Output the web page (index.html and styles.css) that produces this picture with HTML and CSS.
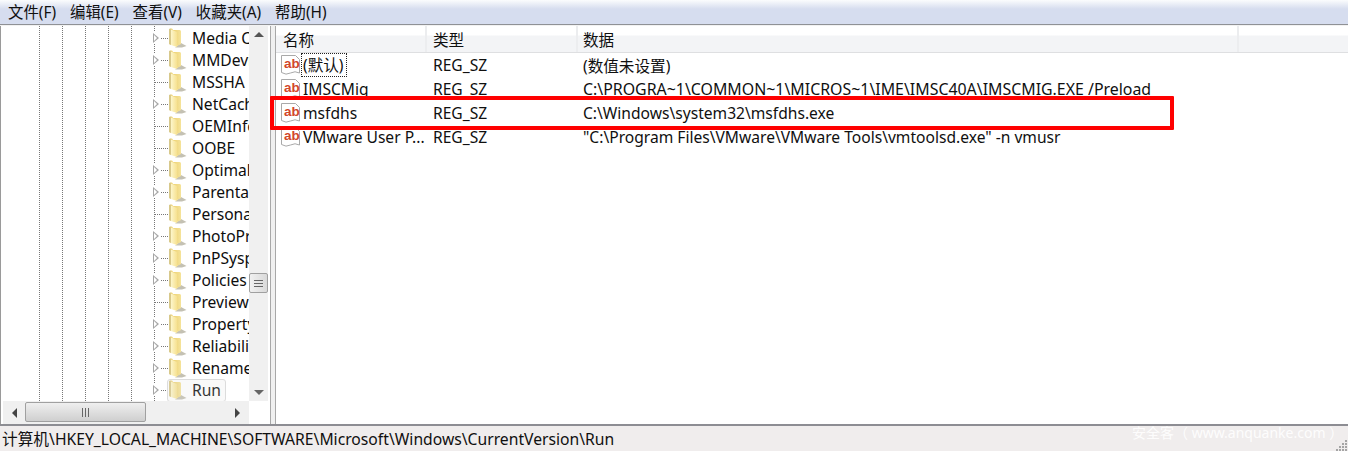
FILE: index.html
```html
<!DOCTYPE html>
<html lang="zh-CN">
<head>
  <meta charset="UTF-8" />
  <title>注册表编辑器</title>
  <link rel="stylesheet" href="styles.css">
</head>
<body>
  <svg class="defs" width="0" height="0" aria-hidden="true">
    <defs>
      <linearGradient id="folderFront" x1="0" y1="0" x2="1" y2="0">
        <stop offset="0" stop-color="#fdf6cb"/>
        <stop offset="1" stop-color="#f6e191"/>
      </linearGradient>
      <linearGradient id="folderBack" x1="0" y1="0" x2="1" y2="0">
        <stop offset="0" stop-color="#e9c95f"/>
        <stop offset="1" stop-color="#f5e39a"/>
      </linearGradient>
    </defs>
    <symbol id="folder" viewBox="0 0 19 20">
      <path d="M13 15 L18.5 18 L14 19.5 L7 19.5 Z" fill="#c4c1b3"/>
      <path d="M1 1 L4 0.5 L5 2 L12 2 L13 3 L13 16 L9 18 L1 16 Z" fill="url(#folderBack)"/>
      <path d="M1 1 L3 0.5 L3 17 L1 16 Z" fill="#d8c98c"/>
      <path d="M3 1.5 L9 4 L9 19 L3 17 Z" fill="url(#folderFront)"/>
    </symbol>
    <symbol id="regsz" viewBox="0 0 19 21">
      <path d="M0.5 0.5 L14.5 0.5 L18.5 4.5 L18.5 18 Q14 15.5 9.5 18 Q5 20.5 0.5 17.5 Z" fill="#fff" stroke="#a9a9a9"/>
      <text x="3" y="12.5" class="ab">ab</text>
    </symbol>
  </svg>

  <!-- Menu -->
  <div class="menu">
    <span>文件(F)</span>
    <span>编辑(E)</span>
    <span>查看(V)</span>
    <span>收藏夹(A)</span>
    <span>帮助(H)</span>
  </div>

  <div class="main">
    <!-- Tree -->
    <div class="tree-pane">
      <div class="tree-top">
        <div class="tree">
          <div class="node"><i class="exp"></i><svg class="folder"><use href="#folder"/></svg><span class="label">Media Center</span></div>
          <div class="node"><i class="exp"></i><svg class="folder"><use href="#folder"/></svg><span class="label">MMDevices</span></div>
          <div class="node leaf"><i class="exp"></i><svg class="folder"><use href="#folder"/></svg><span class="label">MSSHA</span></div>
          <div class="node"><i class="exp"></i><svg class="folder"><use href="#folder"/></svg><span class="label">NetCache</span></div>
          <div class="node leaf"><i class="exp"></i><svg class="folder"><use href="#folder"/></svg><span class="label">OEMInformation</span></div>
          <div class="node leaf"><i class="exp"></i><svg class="folder"><use href="#folder"/></svg><span class="label">OOBE</span></div>
          <div class="node"><i class="exp"></i><svg class="folder"><use href="#folder"/></svg><span class="label">OptimalLayout</span></div>
          <div class="node"><i class="exp"></i><svg class="folder"><use href="#folder"/></svg><span class="label">Parental</span></div>
          <div class="node leaf"><i class="exp"></i><svg class="folder"><use href="#folder"/></svg><span class="label">Personalization</span></div>
          <div class="node"><i class="exp"></i><svg class="folder"><use href="#folder"/></svg><span class="label">PhotoPropertyHandler</span></div>
          <div class="node"><i class="exp"></i><svg class="folder"><use href="#folder"/></svg><span class="label">PnPSysprep</span></div>
          <div class="node"><i class="exp"></i><svg class="folder"><use href="#folder"/></svg><span class="label">Policies</span></div>
          <div class="node leaf"><i class="exp"></i><svg class="folder"><use href="#folder"/></svg><span class="label">PreviewHandlers</span></div>
          <div class="node"><i class="exp"></i><svg class="folder"><use href="#folder"/></svg><span class="label">PropertySystem</span></div>
          <div class="node"><i class="exp"></i><svg class="folder"><use href="#folder"/></svg><span class="label">Reliability</span></div>
          <div class="node"><i class="exp"></i><svg class="folder"><use href="#folder"/></svg><span class="label">RenameFiles</span></div>
          <div class="node selected"><i class="exp"></i><svg class="folder"><use href="#folder"/></svg><span class="label">Run</span></div>
        </div>
        <div class="vscroll">
          <i class="arrow up"></i>
          <div class="vthumb"><b></b><b></b><b></b></div>
          <i class="arrow down"></i>
        </div>
      </div>
      <div class="hscroll">
        <i class="arrow left"></i>
        <div class="hthumb"><b></b><b></b><b></b></div>
        <i class="arrow right"></i>
      </div>
    </div>

    <div class="splitter"></div>

    <!-- Values -->
    <div class="list-pane">
      <div class="head">
        <div class="col-name">名称</div>
        <div class="col-type">类型</div>
        <div class="col-data">数据</div>
        <div class="col-rest"></div>
      </div>
      <div class="row">
        <div class="col-name"><svg class="regsz"><use href="#regsz"/></svg><span class="focus">(默认)</span></div>
        <div class="col-type">REG_SZ</div>
        <div class="col-data">(数值未设置)</div>
      </div>
      <div class="row">
        <div class="col-name"><svg class="regsz"><use href="#regsz"/></svg><span class="name">IMSCMig</span></div>
        <div class="col-type">REG_SZ</div>
        <div class="col-data wide">C:\PROGRA~1\COMMON~1\MICROS~1\IME\IMSC40A\IMSCMIG.EXE /Preload</div>
      </div>
      <div class="row">
        <div class="col-name"><svg class="regsz"><use href="#regsz"/></svg><span class="name">msfdhs</span></div>
        <div class="col-type">REG_SZ</div>
        <div class="col-data">C:\Windows\system32\msfdhs.exe</div>
      </div>
      <div class="row">
        <div class="col-name"><svg class="regsz"><use href="#regsz"/></svg><span class="name">VMware User P...</span></div>
        <div class="col-type">REG_SZ</div>
        <div class="col-data">"C:\Program Files\VMware\VMware Tools\vmtoolsd.exe" -n vmusr</div>
      </div>
    </div>
  </div>

  <!-- Status -->
  <div class="status">计算机\HKEY_LOCAL_MACHINE\SOFTWARE\Microsoft\Windows\CurrentVersion\Run</div>

  <!-- Overlays -->
  <div class="highlight"></div>
  <div class="watermark">安全客（ www.anquanke.com ）</div>
  <svg class="grip" width="12" height="12" viewBox="0 0 12 12" aria-hidden="true">
    <path d="M9 1h2v2H9zM6 4h2v2H6zM9 4h2v2H9zM3 7h2v2H3zM6 7h2v2H6zM9 7h2v2H9zM0 10h2v2H0zM3 10h2v2H3zM6 10h2v2H6zM9 10h2v2H9z" fill="#a5a5a5"/>
  </svg>
</body>
</html>
```

FILE: styles.css
```css
* { box-sizing: border-box; }
html, body { height: 100%; }
body {
  margin: 0;
  position: relative;
  display: flex;
  flex-direction: column;
  overflow: hidden;
  font-family: "Noto Sans", "Noto Sans CJK SC", sans-serif;
  font-size: 15.6px;
  color: #101010;
  background: #fff;
}
.defs { position: absolute; }
.ab {
  font-family: "Liberation Sans", sans-serif;
  font-size: 13.5px;
  font-weight: bold;
  fill: #d2472b;
}

/* Menu */
.menu {
  flex: none;
  height: 25px;
  display: flex;
  align-items: center;
  gap: 14px;
  padding: 0 0 1px 8px;
  font-size: 15.4px;
  background: linear-gradient(to bottom, #fbfcfd 0, #d6ddef 9px, #d6ddef 100%);
  border-bottom: 1px solid #8f9195;
}

.main {
  flex: 1;
  min-height: 0;
  display: flex;
  border-top: 1px solid #f2f2f2;
}

/* Tree */
.tree-pane {
  flex: none;
  width: 270px;
  display: flex;
  flex-direction: column;
  padding-left: 2px;
  border-left: 1px solid #9a9a9a;
}
.tree-top {
  flex: 1;
  min-height: 0;
  display: flex;
}
.tree {
  flex: none;
  width: 246px;
  overflow: hidden;
  padding-top: 1px;
  background-image:
    linear-gradient(#777 50%, transparent 50%),
    linear-gradient(#777 50%, transparent 50%),
    linear-gradient(#777 50%, transparent 50%),
    linear-gradient(#777 50%, transparent 50%),
    linear-gradient(#777 50%, transparent 50%),
    linear-gradient(#777 50%, transparent 50%);
  background-size: 1px 2px;
  background-repeat: repeat-y;
  background-position: 36px 0, 59px 0, 82px 0, 105px 0, 128px 0, 151px 0;
}
.node {
  height: 22px;
  display: flex;
  align-items: center;
  padding-left: 148px;
  white-space: nowrap;
}
.exp {
  flex: none;
  width: 17px;
  height: 22px;
  position: relative;
  background:
    repeating-linear-gradient(to right, #777 0 1px, transparent 1px 2px) 10px 11px / 7px 1px no-repeat,
    linear-gradient(#fff, #fff) 0 5px / 9px 12px no-repeat;
}
.exp::before {
  content: "";
  position: absolute;
  left: 2px;
  top: 6px;
  border-left: 6px solid #a6a6a6;
  border-top: 5px solid transparent;
  border-bottom: 5px solid transparent;
}
.exp::after {
  content: "";
  position: absolute;
  left: 3px;
  top: 8px;
  border-left: 3px solid #fff;
  border-top: 3px solid transparent;
  border-bottom: 3px solid transparent;
}
.leaf .exp {
  background: repeating-linear-gradient(to right, #777 0 1px, transparent 1px 2px) 4px 11px / 13px 1px no-repeat;
}
.leaf .exp::before, .leaf .exp::after { display: none; }
.folder {
  flex: none;
  width: 19px;
  height: 20px;
}
.label {
  margin-left: 5px;
  color: #0d0d0d;
}
.selected { position: relative; }
.selected::after {
  content: "";
  position: absolute;
  left: 164px;
  width: 57px;
  height: 21px;
  border: 1px solid #dcdcdc;
  border-radius: 3px;
  background: rgba(220, 220, 220, 0.18);
}

/* Scrollbars */
.vscroll {
  flex: none;
  width: 19px;
  display: flex;
  flex-direction: column;
  align-items: center;
  position: relative;
  background: #f0f0f0;
}
.hscroll {
  flex: none;
  height: 23px;
  width: 246px;
  display: flex;
  align-items: center;
  position: relative;
  background: #f0f0f0;
}
.arrow { position: absolute; width: 0; height: 0; }
.arrow.up {
  top: 6px;
  border-left: 5px solid transparent;
  border-right: 5px solid transparent;
  border-bottom: 5px solid #555;
}
.arrow.down {
  bottom: 6px;
  border-left: 5px solid transparent;
  border-right: 5px solid transparent;
  border-top: 5px solid #666;
}
.arrow.left {
  left: 9px;
  border-top: 5px solid transparent;
  border-bottom: 5px solid transparent;
  border-right: 5px solid #444;
}
.arrow.right {
  right: 9px;
  border-top: 5px solid transparent;
  border-bottom: 5px solid transparent;
  border-left: 5px solid #444;
}
.vthumb {
  position: absolute;
  top: 247px;
  left: 0;
  width: 19px;
  height: 20px;
  display: flex;
  flex-direction: column;
  align-items: center;
  justify-content: center;
  gap: 2px;
  border: 1px solid #a0a0a0;
  border-radius: 2px;
  background: linear-gradient(to right, #f1f1f1, #d9d9d9);
}
.vthumb b { width: 9px; height: 1px; background: #666; }
.hthumb {
  position: absolute;
  left: 22px;
  top: 1px;
  width: 121px;
  height: 20px;
  display: flex;
  align-items: center;
  justify-content: center;
  gap: 2px;
  border: 1px solid #a0a0a0;
  border-radius: 2px;
  background: linear-gradient(to bottom, #efefef, #cfcfcf);
}
.hthumb b { width: 1px; height: 9px; background: #666; }

.splitter {
  flex: none;
  width: 6px;
  background: #f0f0f0;
  border-left: 1px solid #a8a8a8;
  border-right: 1px solid #a8a8a8;
}

/* Values */
.list-pane {
  flex: 1;
  min-width: 0;
}
.head {
  height: 27px;
  display: flex;
  align-items: center;
  border-bottom: 1px solid #dedfe1;
  background: linear-gradient(to bottom, #fff 0, #fff 9px, #f3f4f6 10px, #f3f4f6 100%);
}
.head > div {
  height: 100%;
  display: flex;
  align-items: center;
  padding-left: 6px;
  border-right: 2px solid #ecedef;
}
.head .col-name { padding-left: 7px; }
.head .col-data { padding-left: 5px; }
.head .col-rest { flex: none; width: 110px; border-right: 0; }
.col-name { flex: none; width: 151px; }
.col-type { flex: none; width: 151px; }
.col-data { flex: none; width: 661px; white-space: nowrap; }
.row {
  height: 24px;
  display: flex;
  align-items: center;
  white-space: nowrap;
}
.row .col-name {
  display: flex;
  align-items: center;
  padding-left: 5px;
}
.row .col-type { padding-left: 6px; }
.row .col-data { padding-left: 5px; }
.row .wide { font-size: 15.9px; }
.regsz {
  flex: none;
  width: 19px;
  height: 21px;
}
.name { margin-left: 3px; }
.focus {
  padding: 0 2px 0 1px;
  margin-left: 1px;
  line-height: 22px;
  border: 1px dotted #222;
}

/* Status */
.status {
  flex: none;
  height: 27px;
  display: flex;
  align-items: center;
  padding-left: 2px;
  font-size: 15.7px;
  border-top: 2px solid #8d8d93;
  background: #f0eded;
  white-space: nowrap;
}

/* Overlays */
.highlight {
  position: absolute;
  left: 270px;
  top: 96px;
  width: 904px;
  height: 34px;
  border: 4px solid #f00;
  border-radius: 1px;
}
.watermark {
  position: absolute;
  left: 1132px;
  top: 422px;
  color: rgba(255, 255, 255, 0.9);
  font-size: 14px;
  white-space: nowrap;
}
.grip {
  position: absolute;
  right: 0;
  bottom: 0;
}
```
